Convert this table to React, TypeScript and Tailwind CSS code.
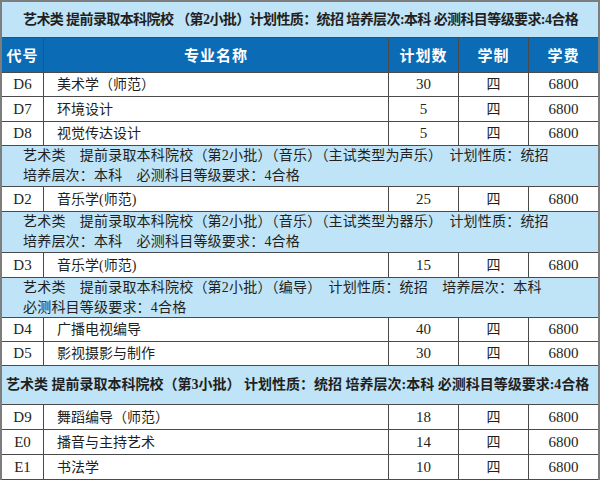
const serif = "font-['Liberation_Serif','Noto_Sans_CJK_SC',serif]"

interface Major {
  code: string
  name: string
  plan: number
  h: string
}

interface Group {
  lines: string[]
  h: string
  pad: string
  text: string
  majors: Major[]
}

const top: Group = {
  lines: ["艺术类 提前录取本科院校 （第2小批）计划性质：统招 培养层次:本科 必测科目等级要求:4合格"],
  h: "h-[36px]",
  pad: "pl-[21px]",
  text: "font-semibold tracking-[-0.6px]",
  majors: [],
}

const blocks: Group[] = [
  {
    lines: [],
    h: "",
    pad: "",
    text: "",
    majors: [
      { code: "D6", name: "美术学（师范）", plan: 30, h: "h-[24px]" },
      { code: "D7", name: "环境设计", plan: 5, h: "h-[25px]" },
      { code: "D8", name: "视觉传达设计", plan: 5, h: "h-[24px]" },
    ],
  },
  {
    lines: [
      "艺术类　提前录取本科院校（第2小批）（音乐）（主试类型为声乐）　计划性质：统招",
      "培养层次：本科　必测科目等级要求：4合格",
    ],
    h: "h-[41px]",
    pad: "pl-[21px]",
    text: "tracking-[0.2px]",
    majors: [{ code: "D2", name: "音乐学(师范)", plan: 25, h: "h-[25px]" }],
  },
  {
    lines: [
      "艺术类　提前录取本科院校（第2小批）（音乐）（主试类型为器乐）　计划性质：统招",
      "培养层次：本科　必测科目等级要求：4合格",
    ],
    h: "h-[41px]",
    pad: "pl-[21px]",
    text: "tracking-[0.2px]",
    majors: [{ code: "D3", name: "音乐学(师范)", plan: 15, h: "h-[25px]" }],
  },
  {
    lines: [
      "艺术类　提前录取本科院校（第2小批）（编导）　计划性质：统招　培养层次：本科",
      "必测科目等级要求：4合格",
    ],
    h: "h-[40px]",
    pad: "pl-[21px]",
    text: "tracking-[0.2px]",
    majors: [
      { code: "D4", name: "广播电视编导", plan: 40, h: "h-[24px]" },
      { code: "D5", name: "影视摄影与制作", plan: 30, h: "h-[24px]" },
    ],
  },
  {
    lines: ["艺术类 提前录取本科院校（第3小批） 计划性质：统招 培养层次:本科 必测科目等级要求:4合格"],
    h: "h-[39px]",
    pad: "pl-[4px]",
    text: "font-semibold tracking-[0px]",
    majors: [
      { code: "D9", name: "舞蹈编导（师范）", plan: 18, h: "h-[25px]" },
      { code: "E0", name: "播音与主持艺术", plan: 14, h: "h-[25px]" },
      { code: "E1", name: "书法学", plan: 10, h: "h-[25px]" },
    ],
  },
]

const cols = "grid grid-cols-[42px_345px_70px_70px_69px]"
const cell = "flex items-center border-r border-[#4a4a4a]"

function Section({ group }: { group: Group }) {
  return (
    <div
      className={`flex flex-col justify-center overflow-hidden border-b border-[#4a4a4a] bg-[#bfe3f7] ${group.h} ${group.pad}`}
    >
      {group.lines.map((line) => (
        <p
          key={line}
          className={`whitespace-nowrap text-[14px] leading-[20px] text-[#231f20] ${serif} ${group.text}`}
        >
          {line}
        </p>
      ))}
    </div>
  )
}

function Row({ major }: { major: Major }) {
  return (
    <div className={`${cols} ${major.h} border-b border-[#4a4a4a] bg-white text-[#231f20] ${serif}`}>
      <div className={`${cell} justify-center text-[15px]`}>{major.code}</div>
      <div className={`${cell} pl-[13px] text-[14px]`}>{major.name}</div>
      <div className={`${cell} justify-center text-[15px]`}>{major.plan}</div>
      <div className={`${cell} justify-center text-[14px]`}>四</div>
      <div className="flex items-center justify-center text-[15px]">6800</div>
    </div>
  )
}

export default function App() {
  const head = ["代号", "专业名称", "计划数", "学制", "学费"]
  return (
    <div className="h-[484px] w-[600px] bg-white">
      <div className="flex w-[600px] flex-col border-2 border-b-0 border-[#7d7d7d]">
        <Section group={top} />
        <div className={`${cols} h-[35px] border-b border-[#4a4a4a] bg-[#0b6bb5]`}>
          {head.map((label, i) => (
            <div
              key={label}
              className={`flex items-center justify-center text-[15px] font-bold tracking-[1px] text-white font-['Noto_Sans_CJK_SC',sans-serif] ${
                i < head.length - 1 ? "border-r border-[#4a4a4a]" : ""
              }`}
            >
              {label}
            </div>
          ))}
        </div>
        {blocks.map((group, i) => (
          <div key={i} className="flex flex-col">
            {group.lines.length > 0 && <Section group={group} />}
            {group.majors.map((m) => (
              <Row key={m.code} major={m} />
            ))}
          </div>
        ))}
      </div>
    </div>
  )
}
